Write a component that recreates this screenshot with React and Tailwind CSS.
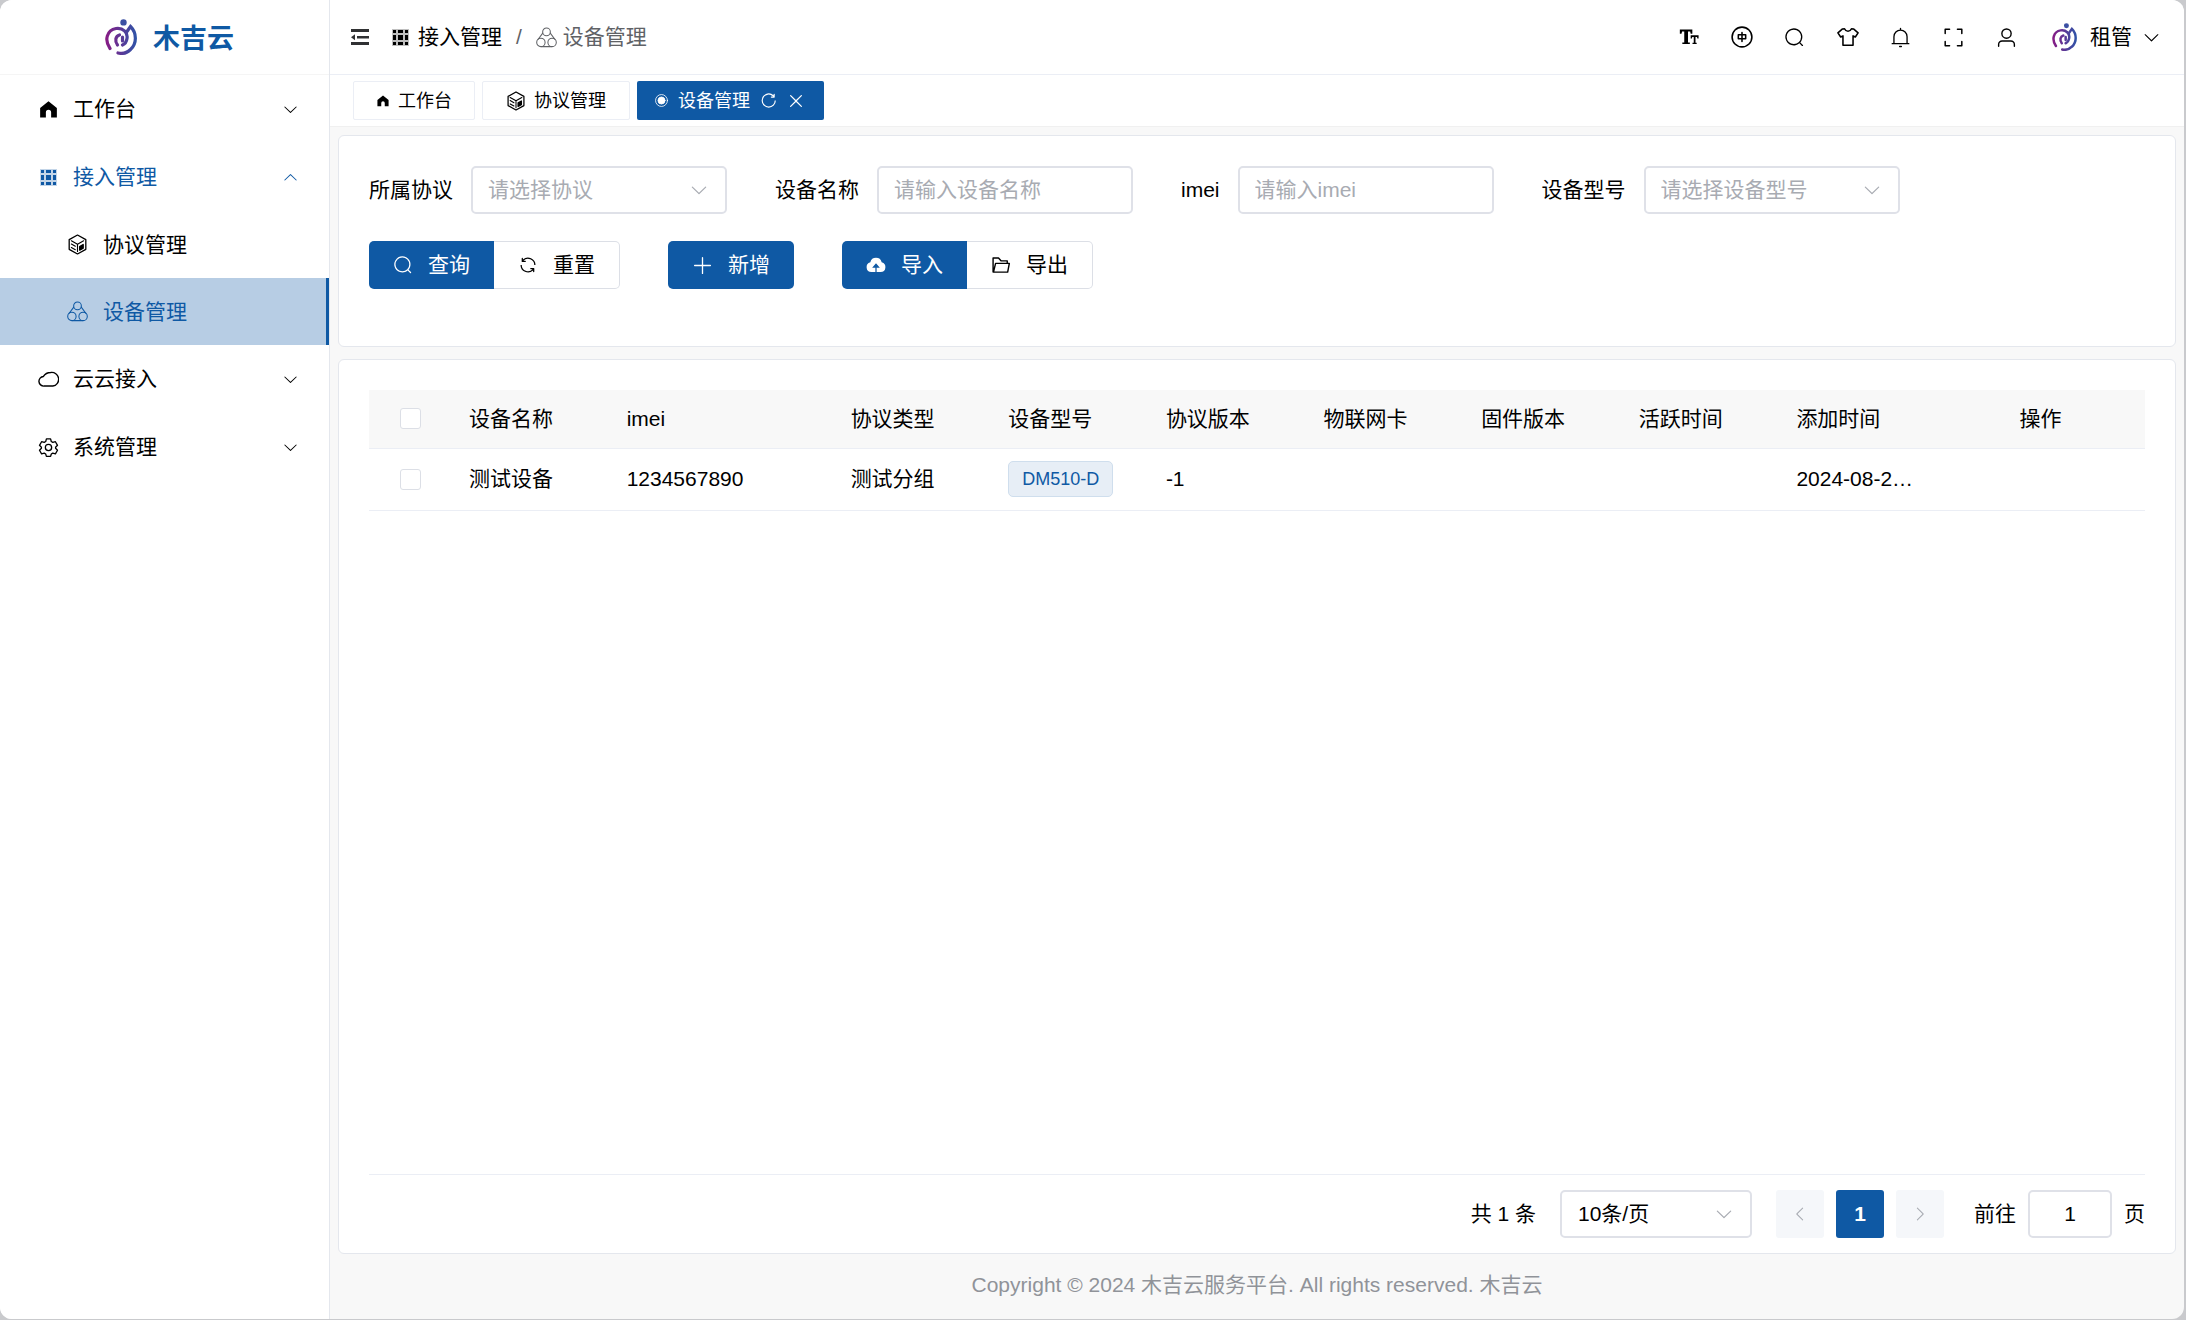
import React, { useState } from 'react';
import clsx from 'clsx';

// Filled icons, drawn on a 1024 grid
const shapes = {
  down: 'M831.872 340.864 512 652.672 192.128 340.864a30.592 30.592 0 0 0-42.752 0 29.12 29.12 0 0 0 0 41.6L489.664 714.24a32 32 0 0 0 44.672 0l340.288-331.712a29.12 29.12 0 0 0 0-41.728 30.592 30.592 0 0 0-42.752 0z',
  search: 'm795.904 750.72 124.992 124.928a32 32 0 0 1-45.248 45.248L750.656 795.904a416 416 0 1 1 45.248-45.248zM480 832a352 352 0 1 0 0-704 352 352 0 0 0 0 704z',
  refresh: 'M771.776 794.88A384 384 0 0 1 128 512h64a320 320 0 0 0 555.712 216.448H654.72a32 32 0 1 1 0-64h149.056a32 32 0 0 1 32 32v148.928a32 32 0 1 1-64 0v-50.56zM276.288 295.616h92.992a32 32 0 0 1 0 64H220.16a32 32 0 0 1-32-32V178.56a32 32 0 0 1 64 0v50.56A384 384 0 0 1 896.128 512h-64a320 320 0 0 0-555.776-216.384z',
  reload: 'M784.512 230.272v-50.56a32 32 0 1 1 64 0v149.056a32 32 0 0 1-32 32H667.52a32 32 0 1 1 0-64h92.992A320 320 0 1 0 524.8 833.152a320 320 0 0 0 320-320h64a384 384 0 0 1-384 384 384 384 0 0 1-384-384 384 384 0 0 1 643.712-282.88z',
  close: 'M764.288 214.592 512 466.88 259.712 214.592a31.936 31.936 0 0 0-45.12 45.12L466.752 512 214.528 764.224a31.936 31.936 0 1 0 45.12 45.184L512 557.184l252.288 252.288a31.936 31.936 0 0 0 45.12-45.12L557.12 512.064l252.288-252.352a31.936 31.936 0 1 0-45.12-45.184z',
  plus: 'M480 480V128a32 32 0 0 1 64 0v352h352a32 32 0 1 1 0 64H544v352a32 32 0 1 1-64 0V544H128a32 32 0 0 1 0-64h352z',
  home: 'M512 110 920 440V900H640V650a128 128 0 0 0-256 0V900H104V440z',
};

const Icon = ({ name, className }) => (
  <svg viewBox="0 0 1024 1024" fill="currentColor" className={clsx('shrink-0', className)} aria-hidden="true">
    <path d={shapes[name]} />
  </svg>
);

// Outlined icons, drawn on a 24 grid
const Line = ({ className, width = 1.5, children }) => (
  <svg
    viewBox="0 0 24 24"
    fill="none"
    stroke="currentColor"
    strokeWidth={width}
    strokeLinecap="round"
    strokeLinejoin="round"
    className={clsx('shrink-0', className)}
    aria-hidden="true"
  >
    {children}
  </svg>
);

const GridIcon = ({ className }) => (
  <svg viewBox="0 0 17 17" fill="currentColor" className={clsx('shrink-0', className)} aria-hidden="true">
    <path d="M1 1h3v3H1zM6 1h5v3H6zM13 1h3v3h-3zM1 6h3v5H1zM6 6h5v5H6zM13 6h3v5h-3zM1 13h3v3H1zM6 13h5v3H6zM13 13h3v3h-3z" />
    <path d="M0 0h5v5H0zM5 0h7v5H5zM12 0h5v5h-5zM0 5h5v7H0zM5 5h7v7H5zM12 5h5v7h-5zM0 12h5v5H0zM5 12h7v5H5zM12 12h5v5h-5z" opacity=".25" />
  </svg>
);

const BoxIcon = ({ className }) => (
  <Line className={className} width={1.5}>
    <path d="M12 1.200 21.500 6.500v11L12 22.800 2.500 17.500v-11z" />
    <path d="M5 7.800 12 11.700l7-3.900M12 12v8M5 11.500l4.500 2.500M5 15.500l4.500 2.500" strokeWidth="1.300" />
    <path d="M14.500 14.300 18.500 12v4.300l-4 2.200z" fill="currentColor" />
  </Line>
);

const RingsIcon = ({ className }) => (
  <Line className={className} width={1.2}>
    <circle cx="12" cy="5.6" r="4.4" />
    <circle cx="5.600" cy="17.600" r="4.800" />
    <circle cx="18.400" cy="17.600" r="4.800" />
    <path d="M7.700 7 2.500 14M16.300 7l5.200 7M6 22.400h12" />
  </Line>
);

const CloudIcon = ({ className }) => (
  <Line className={className} width={1.6}>
    <path d="M7 19.5a5.5 5.5 0 0 1-.8-11C8 5.500 11 4 14.500 4A7.700 7.700 0 0 1 17 19.500z" />
  </Line>
);

const GearIcon = ({ className }) => (
  <Line className={className}>
    <path d="M9.600 2.200h4.800l.8 3 1.700 1 3-.8 2.400 4.100-2.200 2.200v1.200l2.200 2.200-2.400 4.100-3-.8-1.700 1-.8 2.800H9.600l-.8-2.800-1.700-1-3 .8-2.400-4.100 2.200-2.200v-1.200L1.700 9.500l2.400-4.100 3 .8 1.700-1z" />
    <circle cx="12" cy="12" r="3.600" />
  </Line>
);

const Logo = ({ id, className }) => (
  <svg viewBox="0 0 32 36" fill="none" strokeWidth="3.200" strokeLinecap="round" className={clsx('shrink-0', className)} aria-hidden="true">
    <defs>
      <linearGradient id={id} x1="0" y1="0" x2="32" y2="0" gradientUnits="userSpaceOnUse">
        <stop offset="0" stopColor="#8a1a84" />
        <stop offset="1" stopColor="#2d55a8" />
      </linearGradient>
    </defs>
    <circle cx="18.500" cy="3.400" r="3.200" fill="#3b50a3" />
    <g stroke={`url(#${id})`}>
      <path d="M5 29.500C-1 21 2 11 11 9.500c7-1 12 4 11 10-.5 3.500-2 5.500-4.500 6.500" />
      <path d="M22 12.500 25.500 7.500C32 14 32 24.500 25.500 30.500 22 34 17 35 13 34" />
      <path d="M14.500 16c-4 1-5 6-2 10M17.500 18v4" />
    </g>
  </svg>
);

const headerTools = [
  {
    label: '字号',
    icon: (
      <svg viewBox="0 0 24 24" fill="currentColor" className="size-[20px]" aria-hidden="true">
        <path d="M1 3h15v5h-2l-.6-2.500h-2.600V18.500h2.200v2H4v-2h2.300V5.500H3.700L3 8H1zM14 10h9.500v3.800H22l-.4-1.700h-1.800V19h1.400V20.500h-5V19h1.500v-6.900h-1.800l-.4 1.700H14z" />
      </svg>
    ),
  },
  {
    label: '语言',
    icon: (
      <Line className="size-[22px]" width={1.7}>
        <circle cx="12" cy="12" r="10.800" />
        <path d="M8 9.500h8v4.500H8zM12 7v10" />
      </Line>
    ),
  },
  { label: '搜索', icon: <Icon name="search" className="size-[21px]" /> },
  {
    label: '主题',
    icon: (
      <Line className="size-[22px]" width={1.7}>
        <path d="M8.200 3 6 3.200 1 7.500l3 4.500 2.500-1.200V21h11V10.800L20 12l3-4.500-5-4.300-2.200-.2c-1.500 3.500-6.100 3.500-7.600 0z" />
      </Line>
    ),
  },
  {
    label: '消息',
    icon: (
      <Line className="size-[21px]">
        <path d="M2.500 19h19M4.500 19v-8a7.500 7.500 0 0 1 15 0v8M12 1.500v2M11 22.300h2" />
      </Line>
    ),
  },
  {
    label: '全屏',
    icon: (
      <Line className="size-[21px]" width={1.7}>
        <path d="M2.500 7.500v-5h5M16.500 2.500h5v5M21.500 16.500v5h-5M7.500 21.500h-5v-5" />
      </Line>
    ),
  },
  {
    label: '用户',
    icon: (
      <Line className="size-[21px]" width={1.6}>
        <circle cx="12" cy="7.500" r="5.300" />
        <path d="M3 22v-2a4 4 0 0 1 4-4h10a4 4 0 0 1 4 4v2" />
      </Line>
    ),
  },
];

const columns = ['设备名称', 'imei', '协议类型', '设备型号', '协议版本', '物联网卡', '固件版本', '活跃时间', '添加时间'];

const rows = [
  {
    name: '测试设备',
    imei: '1234567890',
    type: '测试分组',
    model: 'DM510-D',
    version: '-1',
    sim: '',
    firmware: '',
    activeTime: '',
    createTime: '2024-08-2…',
  },
];

const MenuItem = ({ icon, label, open, onClick }) => (
  <button
    type="button"
    onClick={onClick}
    aria-expanded={!!open}
    className={clsx('flex h-[68px] w-full items-center pl-[38px] pr-[30px] text-left', open && 'text-[#0f59a4]')}
  >
    {icon}
    <span className="ml-[14px] flex-1">{label}</span>
    <Icon name="down" className={clsx('size-[17px]', open && 'rotate-180')} />
  </button>
);

const Sidebar = () => {
  const [open, setOpen] = useState(true);

  return (
    <aside className="w-[330px] shrink-0 border-r border-[#e4e7ed] bg-white">
      <div className="flex h-[75px] items-center justify-center gap-4 border-b border-[#f5f5f5] pl-[10px]">
        <Logo id="logo-side" className="h-[36px] w-[32px]" />
        <span className="pt-1 text-[27px] font-bold text-[#0f59a4]">木吉云</span>
      </div>
      <nav>
        <MenuItem icon={<Icon name="home" className="size-[21px]" />} label="工作台" />
        <MenuItem
          icon={<GridIcon className="mx-[2px] size-[17px]" />}
          label="接入管理"
          open={open}
          onClick={() => setOpen(!open)}
        />
        {open && (
          <>
            <a href="#protocol" className="flex h-[67px] items-center gap-[15px] pl-[67px]">
              <BoxIcon className="size-[21px]" />
              协议管理
            </a>
            <a
              href="#device"
              className="flex h-[67px] items-center gap-[15px] border-r-3 border-[#0f59a4] bg-[#b7cde4] pl-[67px] text-[#0f59a4]"
            >
              <RingsIcon className="size-[21px]" />
              设备管理
            </a>
          </>
        )}
        <MenuItem icon={<CloudIcon className="size-[21px]" />} label="云云接入" />
        <MenuItem icon={<GearIcon className="size-[21px]" />} label="系统管理" />
      </nav>
    </aside>
  );
};

const Header = () => (
  <header className="flex h-[75px] items-center border-b border-[#ebeef5] bg-white pl-[21px] pr-[23px]">
    <button type="button" aria-label="折叠菜单" className="text-[#303133]">
      <svg viewBox="0 0 18 18" fill="currentColor" className="size-[18px]" aria-hidden="true">
        <path d="M0 1h18v3H0zM6 8h12v2.500H6zM0 14h18v3H0zM0 9.200l4-3v6z" />
      </svg>
    </button>
    <div className="ml-[23px] flex items-center">
      <GridIcon className="size-[17px]" />
      <a href="#access" className="ml-[9px]">接入管理</a>
      <span className="mx-[14px] text-[#606266]">/</span>
      <RingsIcon className="size-[21px] text-[#606266]" />
      <span className="ml-[6px] text-[#606266]">设备管理</span>
    </div>
    <div className="ml-auto flex items-center">
      {headerTools.map((item) => (
        <button
          key={item.label}
          type="button"
          aria-label={item.label}
          className="flex h-12 w-[53px] items-center justify-center"
        >
          {item.icon}
        </button>
      ))}
      <button type="button" className="ml-[19px] flex items-center">
        <Logo id="logo-user" className="h-[28px] w-[25px]" />
        <span className="ml-[13px] mr-[10px]">租管</span>
        <Icon name="down" className="size-[19px]" />
      </button>
    </div>
  </header>
);

const Tabs = () => (
  <div className="flex h-[52px] items-center gap-[7px] border-b border-[#f0f0f0] bg-white px-[23px] text-[18px]">
    <button type="button" className="flex h-[39px] items-center gap-2 rounded-xs border border-[#ebeef5] px-[22px]">
      <Icon name="home" className="size-[14px]" />
      工作台
    </button>
    <button type="button" className="flex h-[39px] items-center gap-2 rounded-xs border border-[#ebeef5] px-[23px]">
      <BoxIcon className="size-[20px]" />
      协议管理
    </button>
    <div className="flex h-[39px] items-center rounded-xs bg-[#0f59a4] px-[18px] text-white">
      <Line className="size-[13px]" width={1.5}>
        <circle cx="12" cy="12" r="11" />
        <circle cx="12" cy="12" r="6.500" fill="currentColor" />
      </Line>
      <span className="ml-[10px]">设备管理</span>
      <button type="button" aria-label="刷新" className="ml-[9px]">
        <Icon name="reload" className="size-[19px]" />
      </button>
      <button type="button" aria-label="关闭" className="ml-2">
        <Icon name="close" className="size-[20px]" />
      </button>
    </div>
  </div>
);

const fieldClass = 'h-12 w-[256px] rounded-[5px] border-2 border-[#dfe1e8] bg-white px-[15px] placeholder:text-[#a8abb2]';

const TextField = ({ id, label }) => (
  <div className="flex items-center gap-[18px]">
    <label htmlFor={id}>{label}</label>
    <input id={id} type="text" placeholder={`请输入${label}`} className={fieldClass} />
  </div>
);

const SelectField = ({ id, label, placeholder }) => (
  <div className="flex items-center gap-[18px]">
    <label htmlFor={id}>{label}</label>
    <div className="relative">
      <select id={id} defaultValue="" className={clsx(fieldClass, 'appearance-none text-[#a8abb2]')}>
        <option value="">{placeholder}</option>
      </select>
      <Icon name="down" className="pointer-events-none absolute right-[18px] top-[14px] size-5 text-[#a8abb2]" />
    </div>
  </div>
);

const btn = 'flex h-12 items-center gap-[15px] px-6';
const primary = 'bg-[#0f59a4] text-white';
const plain = 'border border-l-0 border-[#dcdfe6] bg-white';

const SearchPanel = () => (
  <section className="min-h-[212px] rounded-md border border-[#e4e7ed] bg-white px-[30px] pt-[30px]">
    <form onSubmit={(e) => e.preventDefault()}>
      <div className="flex flex-wrap gap-x-12 gap-y-[27px]">
        <SelectField id="protocol" label="所属协议" placeholder="请选择协议" />
        <TextField id="name" label="设备名称" />
        <TextField id="imei" label="imei" />
        <SelectField id="model" label="设备型号" placeholder="请选择设备型号" />
      </div>
      <div className="mt-[27px] flex flex-wrap gap-12">
        <div className="flex">
          <button type="submit" className={clsx(btn, primary, 'rounded-l-[5px]')}>
            <Icon name="search" className="size-5" />
            查询
          </button>
          <button type="reset" className={clsx(btn, plain, 'rounded-r-[5px]')}>
            <Icon name="refresh" className="size-5" />
            重置
          </button>
        </div>
        <button type="button" className={clsx(btn, primary, 'rounded-[5px]')}>
          <Icon name="plus" className="size-[21px]" />
          新增
        </button>
        <div className="flex">
          <button type="button" className={clsx(btn, primary, 'rounded-l-[5px]')}>
            <svg viewBox="0 0 24 24" className="size-5 shrink-0" aria-hidden="true">
              <path d="M6.500 20.500a6 6 0 0 1-1.300-11.800 7 7 0 0 1 13.600 0A6 6 0 0 1 17.500 20.500z" fill="currentColor" />
              <path d="M12 21v-8M9 14.500 12 11l3 3.500z" fill="#0f59a4" stroke="#0f59a4" strokeWidth="1.500" />
            </svg>
            导入
          </button>
          <button type="button" className={clsx(btn, plain, 'rounded-r-[5px]')}>
            <Line className="size-5" width={1.7}>
              <path d="M4.500 20.500h-2v-17H9l3 3.500h7.500v3M3 20.500 5.500 10H22l-2 10.500z" />
            </Line>
            导出
          </button>
        </div>
      </div>
    </form>
  </section>
);

const check = 'block mx-auto size-[21px] appearance-none rounded-[3px] border border-[#dcdfe6] bg-white checked:bg-[#0f59a4]';

const DeviceTable = () => (
  <table className="w-full table-fixed border-collapse text-left">
    <colgroup>
      <col className="w-[82px]" />
      <col />
      <col className="w-[224px]" />
      <col />
      <col />
      <col />
      <col />
      <col />
      <col />
      <col />
      <col className="w-[209px]" />
    </colgroup>
    <thead>
      <tr className="h-[58px] border-b border-[#ebeef5] bg-[#f8f8f8]">
        <th>
          <input type="checkbox" aria-label="全选" className={check} />
        </th>
        {columns.map((item) => (
          <th key={item} className="px-[18px] font-normal">{item}</th>
        ))}
        <th className="text-center font-normal">操作</th>
      </tr>
    </thead>
    <tbody>
      {rows.map((row) => (
        <tr key={row.imei} className="h-[62px] border-b border-[#ebeef5]">
          <td>
            <input type="checkbox" aria-label={row.name} className={check} />
          </td>
          <td className="px-[18px]">{row.name}</td>
          <td className="px-[18px]">{row.imei}</td>
          <td className="px-[18px]">{row.type}</td>
          <td className="px-[18px]">
            <span className="inline-flex h-9 items-center rounded-[5px] border border-[#cfdeed] bg-[#e7eef6] px-[13px] align-middle text-[18px] text-[#0f59a4]">
              {row.model}
            </span>
          </td>
          <td className="px-[18px]">{row.version}</td>
          <td className="px-[18px]">{row.sim}</td>
          <td className="px-[18px]">{row.firmware}</td>
          <td className="px-[18px]">{row.activeTime}</td>
          <td className="whitespace-nowrap px-[18px]">{row.createTime}</td>
          <td />
        </tr>
      ))}
    </tbody>
  </table>
);

const Pagination = () => (
  <div className="flex items-center justify-end border-t border-[#ebeef5] pb-[15px] pt-[15px]">
    <span>共 1 条</span>
    <div className="relative ml-6">
      <select aria-label="每页条数" className="h-12 w-48 appearance-none rounded-[5px] border-2 border-[#dfe1e8] bg-white px-4">
        <option>10条/页</option>
      </select>
      <Icon name="down" className="pointer-events-none absolute right-[18px] top-[14px] size-5 text-[#a8abb2]" />
    </div>
    <div className="ml-6 flex gap-3">
      <button type="button" aria-label="上一页" className="flex size-12 items-center justify-center rounded-[3px] bg-[#f5f7fa] text-[#a8abb2]">
        <Icon name="down" className="size-[18px] rotate-90" />
      </button>
      <button type="button" className="size-12 rounded-[3px] bg-[#0f59a4] font-bold text-white">1</button>
      <button type="button" aria-label="下一页" className="flex size-12 items-center justify-center rounded-[3px] bg-[#f5f7fa] text-[#a8abb2]">
        <Icon name="down" className="size-[18px] -rotate-90" />
      </button>
    </div>
    <label htmlFor="page" className="ml-[30px]">前往</label>
    <input
      id="page"
      type="text"
      defaultValue="1"
      className="mx-3 h-12 w-[84px] rounded-[5px] border-2 border-[#dfe1e8] bg-white text-center"
    />
    <span>页</span>
  </div>
);

const App = () => {
  return (
    <div className="h-screen bg-[#c9cacd] pb-px pr-[2px] font-['Liberation_Sans','Noto_Sans_CJK_SC',sans-serif] text-[21px] leading-[30px] text-black">
      <div className="flex h-full overflow-hidden rounded-xl bg-[#f8f8f8]">
        <Sidebar />
        <div className="flex min-w-0 flex-1 flex-col">
          <Header />
          <Tabs />
          <main className="flex flex-1 flex-col gap-3 px-2 pt-2">
            <SearchPanel />
            <section className="flex flex-1 flex-col justify-between rounded-md border border-[#e4e7ed] bg-white px-[30px] pt-[30px]">
              <DeviceTable />
              <Pagination />
            </section>
          </main>
          <footer className="flex h-[65px] items-center justify-center pb-1 text-[#909399]">
            Copyright © 2024 木吉云服务平台. All rights reserved. 木吉云
          </footer>
        </div>
      </div>
    </div>
  );
};

export default App;
